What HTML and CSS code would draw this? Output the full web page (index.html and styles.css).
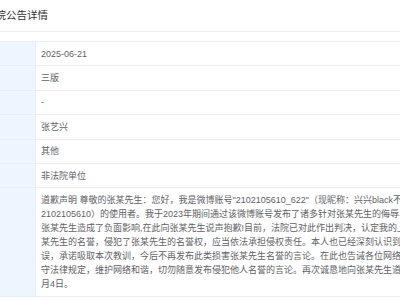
FILE: index.html
```html
<!DOCTYPE html>
<html>
	<head>
		<meta charset="UTF-8">
		<title>法院公告详情</title>
		<link rel="stylesheet" href="styles.css">
	</head>
	<body>
		<div class="page">
			<div class="title">法院公告详情</div>
			<div class="info">
				<div class="label">发布日期</div>
				<div class="value">2025-06-21</div>
				<div class="label">版面</div>
				<div class="value">三版</div>
				<div class="label">公告号</div>
				<div class="value">-</div>
				<div class="label">当事人</div>
				<div class="value">张艺兴</div>
				<div class="label">公告类型</div>
				<div class="value">其他</div>
				<div class="label">发布单位</div>
				<div class="value">非法院单位</div>
				<div class="label">公告内容</div>
				<div class="value text">道歉声明 尊敬的张某先生：您好，我是微博账号"2102105610_622"（现昵称：兴兴black不显示，原昵称：<br>2102105610）的使用者。我于2023年期间通过该微博账号发布了诸多针对张某先生的侮辱、诽谤言论，给<br>张某先生造成了负面影响,在此向张某先生说声抱歉!目前，法院已对此作出判决，认定我的上述行为损害了张<br>某先生的名誉，侵犯了张某先生的名誉权，应当依法承担侵权责任。本人也已经深刻认识到自己的错<br>误，承诺吸取本次教训，今后不再发布此类损害张某先生名誉的言论。在此也告诫各位网络用户，遵<br>守法律规定，维护网络和谐，切勿随意发布侵犯他人名誉的言论。再次诚恳地向张某先生道歉！2025年6<br>月4日。</div>
			</div>
		</div>
	</body>
</html>
```

FILE: styles.css
```css
*{
	padding:0;
	margin:0;
	box-sizing: border-box;
}
body{
	background: #fff;
	font-family: "Liberation Sans", "Noto Sans CJK SC", sans-serif;
	color: #606266;
	overflow: hidden;
}
.page{
	margin-left: -66px;
	width: 520px;
}
.title{
	height: 32px;
	line-height: 30px;
	padding-left: 51px;
	font-size: 10.5px;
	color: #303133;
	border-bottom: 1px solid #f0f0f0;
}
.info{
	margin-top: 9px;
	display: grid;
	grid-template-columns: 101px 1fr;
	border-top: 1px solid #ebeef5;
	font-size: 9px;
	line-height: 14px;
}
.info .label{
	background: #edf5fe;
	border-bottom: 1px solid #e6eef7;
	color: #909399;
	white-space: nowrap;
	padding: 4.7px 8px;
}
.info .value{
	border-bottom: 1px solid #ebeef5;
	border-left: 1px solid #e6eef7;
	padding: 4.7px 5px;
	white-space: nowrap;
	overflow: hidden;
}
```
